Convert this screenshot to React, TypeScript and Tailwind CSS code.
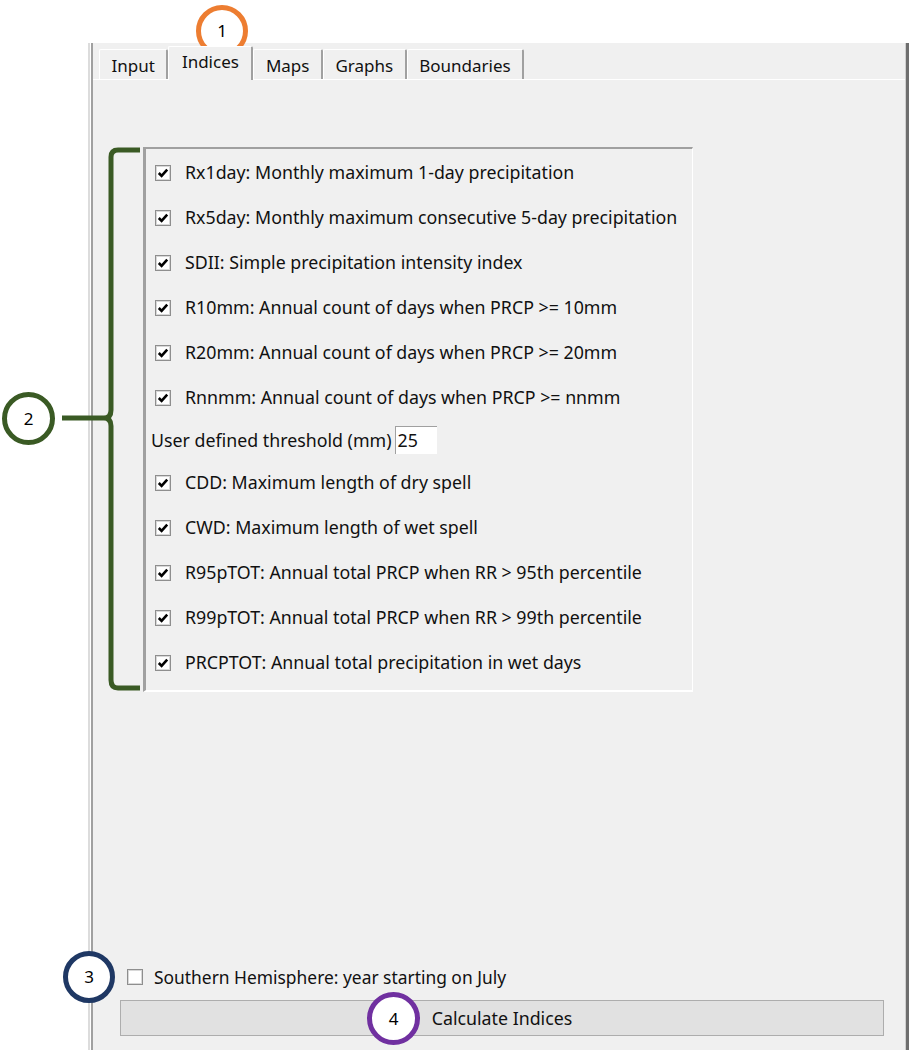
import React from "react";

const font = { fontFamily: '"Noto Sans", "Open Sans", "Liberation Sans", sans-serif' };

function Check({ checked = true }: { checked?: boolean }) {
  return (
    <svg width="16" height="16" viewBox="0 0 16 16" className="shrink-0">
      <rect x="0.5" y="0.5" width="15" height="15" fill="#ffffff" stroke="#8e8e8e" />
      <rect x="1.5" y="1.5" width="13" height="13" fill="none" stroke="#d8d8d8" />
      {checked && (
        <path d="M3.8 8 L6.6 10.9 L12.2 4.6" fill="none" stroke="#000" strokeWidth="2.6" />
      )}
    </svg>
  );
}

const items = [
  "Rx1day: Monthly maximum 1-day precipitation",
  "Rx5day: Monthly maximum consecutive 5-day precipitation",
  "SDII: Simple precipitation intensity index",
  "R10mm: Annual count of days when PRCP >= 10mm",
  "R20mm: Annual count of days when PRCP >= 20mm",
  "Rnnmm: Annual count of days when PRCP >= nnmm",
];
const items2 = [
  "CDD: Maximum length of dry spell",
  "CWD: Maximum length of wet spell",
  "R95pTOT: Annual total PRCP when RR > 95th percentile",
  "R99pTOT: Annual total PRCP when RR > 99th percentile",
  "PRCPTOT: Annual total precipitation in wet days",
];

function Row({ text }: { text: string }) {
  return (
    <div className="flex h-[45px] items-center gap-[14px] pl-[9px]">
      <Check />
      <span className="text-[17.8px] text-[#111111]">{text}</span>
    </div>
  );
}

function Tab({ label, active = false }: { label: string; active?: boolean }) {
  return (
    <div
      className={
        active
          ? "flex h-[34px] items-start px-[12.5px] pt-[4px] bg-[#f0f0f0] border-t border-l border-white border-r-2 border-r-[#a0a0a0] rounded-t-[2px] -mb-px relative z-10"
          : "flex h-[30px] items-start px-[11.5px] pt-[5px] bg-[#f0f0f0] border-t border-l border-white border-r-2 border-r-[#a0a0a0] rounded-t-[2px]"
      }
    >
      <span className="text-[17px] leading-[22px] text-[#111111]">{label}</span>
    </div>
  );
}

function Circle({ n, color, className }: { n: string; color: string; className: string }) {
  return (
    <div className={"absolute flex items-center justify-center rounded-full bg-white " + className} style={{ borderColor: color }}>
      <span className="text-[17px] text-black" style={font}>{n}</span>
    </div>
  );
}

export default function App() {
  return (
    <div className="relative w-[909px] h-[1050px] bg-white overflow-hidden" style={font}>
      <div className="pt-[43px] pl-[88px]">
        <div className="flex h-[1007px] w-[821px]">
          <div className="w-[2px] bg-[#dcdcdc]" />
          <div className="w-[1px] bg-white" />
          <div className="w-[2px] bg-[#a0a0a0]" />
          <div className="flex flex-1 flex-col bg-[#f0f0f0]">
            <div className="flex h-[36px] items-end pl-[6px]">
              <Tab label="Input" />
              <Tab label="Indices" active />
              <Tab label="Maps" />
              <Tab label="Graphs" />
              <Tab label="Boundaries" />
            </div>
            <div className="flex flex-1 flex-col border-t border-white">
              <div className="ml-[50px] mt-[67px] w-[550px] h-[545px] border-l-[3px] border-t-2 border-[#a0a0a0] border-r border-b-2 border-r-white border-b-white pt-[1px]">
                {items.map((t) => (
                  <Row key={t} text={t} />
                ))}
                <div className="flex h-[40px] items-center gap-[3px] pl-[5px]">
                  <span className="text-[17.8px] text-[#111111]">User defined threshold (mm)</span>
                  <div className="flex h-[28px] w-[42px] items-center bg-white border-t border-l border-[#a0a0a0] pl-[2px] text-[17.8px] text-[#111111]">
                    25
                  </div>
                </div>
                {items2.map((t) => (
                  <Row key={t} text={t} />
                ))}
              </div>
              <div className="flex-1" />
              <div className="flex items-center gap-[11px] pl-[34px] mb-[10px]">
                <Check checked={false} />
                <span className="text-[17.4px] text-[#111111]">Southern Hemisphere: year starting on July</span>
              </div>
              <div className="ml-[27px] mb-[14px] flex h-[36px] w-[764px] items-center justify-center border border-[#adadad] bg-[#e1e1e1]">
                <span className="text-[17.8px] text-[#111111]">Calculate Indices</span>
              </div>
            </div>
          </div>
          <div className="w-[1px] bg-[#d0d0d0]" />
          <div className="w-[3px] bg-[#6e6e6e]" />
        </div>
      </div>

      <svg className="absolute left-0 top-0" width="909" height="1050" viewBox="0 0 909 1050" fill="none">
        <path d="M140 150 H118 Q111 150 111 157 V410 Q111 418 104 418 H62 M104 418 Q111 418 111 426 V680 Q111 688 118 688 H140" stroke="#3a5a24" strokeWidth="5" />
      </svg>
      <Circle n="1" color="#ed7d31" className="left-[196px] top-[5px] w-[52px] h-[52px] border-[5px]" />
      <Circle n="2" color="#3a5a24" className="left-[2px] top-[392px] w-[53px] h-[53px] border-[5px]" />
      <Circle n="3" color="#1f3864" className="left-[63px] top-[951px] w-[52px] h-[52px] border-[5px]" />
      <Circle n="4" color="#7030a0" className="left-[367px] top-[992px] w-[53px] h-[53px] border-[5px]" />
    </div>
  );
}
